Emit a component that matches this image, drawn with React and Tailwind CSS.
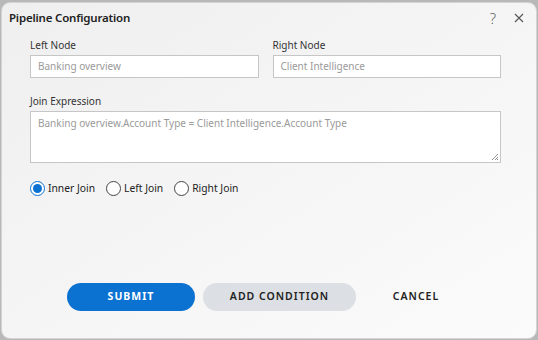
import React from "react";

function Radio({ checked, label }) {
  return (
    <label className="flex items-center gap-[3px]">
      <span
        className={
          "flex h-[15px] w-[15px] items-center justify-center rounded-full border bg-white " +
          (checked ? "border-[#0b72d2]" : "border-[#444]")
        }
      >
        {checked && <span className="h-[9px] w-[9px] rounded-full bg-[#0b72d2]" />}
      </span>
      <span className="text-[10.3px] text-[#222]">{label}</span>
    </label>
  );
}

export default function App() {
  return (
    <div
      className="h-[340px] w-[538px] bg-[#b8b8b8] pl-[1px] pt-[2px]"
      style={{ fontFamily: '"Noto Sans", "Open Sans", sans-serif' }}
    >
      <div className="flex h-[337px] w-[536px] flex-col rounded-[9px] border border-[#d4d4d4] bg-gradient-to-br from-[#efefef] to-[#fbfbfb]">
        <div className="flex h-[30px] items-center justify-between pl-[7px] pr-[12px]">
          <span className="text-[11.5px] font-semibold tracking-[-0.2px] text-[#222]">
            Pipeline Configuration
          </span>
          <div className="flex items-center gap-[18px] text-[#666]">
            <span className="text-[15px] font-light leading-none">?</span>
            <svg width="10" height="10" viewBox="0 0 10 10" stroke="#555" strokeWidth="1.1">
              <path d="M1 1 L9 9 M9 1 L1 9" />
            </svg>
          </div>
        </div>

        <div className="flex flex-col pl-[28px] pr-[35px]">
          <div className="mt-[6px] grid grid-cols-2 gap-x-[14px]">
            <div className="flex flex-col">
              <span className="mb-[3px] text-[10px] leading-[13px] text-[#333]">Left Node</span>
              <div className="flex h-[23px] items-center border border-[#c6c6c6] bg-white px-[7px] text-[10px] text-[#9a9a9a]">
                Banking overview
              </div>
            </div>
            <div className="flex flex-col">
              <span className="mb-[3px] text-[10px] leading-[13px] text-[#333]">Right Node</span>
              <div className="flex h-[23px] items-center border border-[#c6c6c6] bg-white px-[7px] text-[10px] text-[#9a9a9a]">
                Client Intelligence
              </div>
            </div>
          </div>

          <span className="mt-[17px] mb-[3px] text-[10px] leading-[13px] text-[#333]">
            Join Expression
          </span>
          <div className="relative h-[52px] border border-[#c6c6c6] bg-white px-[7px] pt-[4px] text-[10px] text-[#9a9a9a]">
            Banking overview.Account Type = Client Intelligence.Account Type
            <svg className="absolute bottom-[1px] right-[1px]" width="8" height="8" viewBox="0 0 8 8" stroke="#777" strokeWidth="0.8">
              <path d="M7 1 L1 7 M7 4 L4 7 M7 6 L6 7" />
            </svg>
          </div>

          <div className="mt-[18px] flex items-center gap-[11px]">
            <Radio checked label="Inner Join" />
            <Radio label="Left Join" />
            <Radio label="Right Join" />
          </div>
        </div>

        <div className="mt-auto mb-[27px] flex items-center pl-[65px]">
          <button className="h-[28px] w-[128px] rounded-full bg-[#0b72d2] text-[10.5px] font-bold tracking-[1px] text-white">
            SUBMIT
          </button>
          <button className="ml-[8px] h-[28px] w-[153px] rounded-full bg-[#dcdfe3] text-[10.5px] font-semibold tracking-[1px] text-[#222]">
            ADD CONDITION
          </button>
          <button className="ml-[8px] h-[28px] w-[104px] text-[10.5px] font-semibold tracking-[1px] text-[#222]">
            CANCEL
          </button>
        </div>
      </div>
    </div>
  );
}
